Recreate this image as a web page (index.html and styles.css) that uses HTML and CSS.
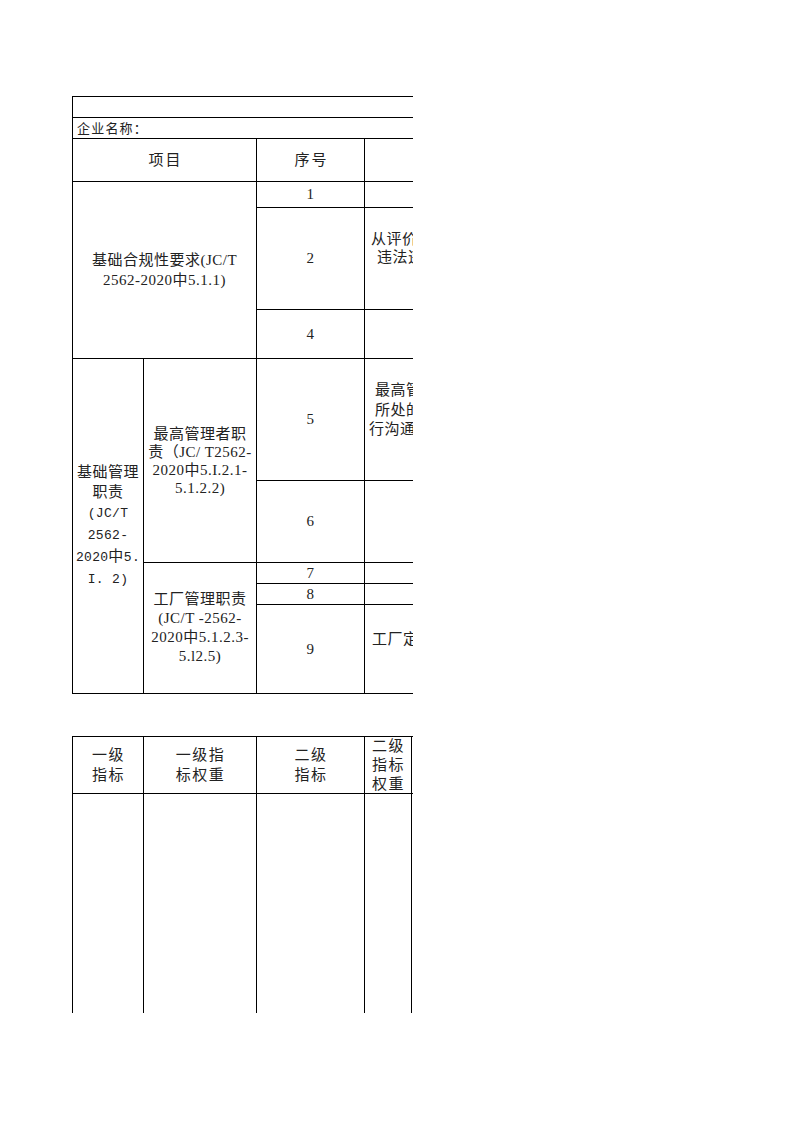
FILE: index.html
```html
<!DOCTYPE html>
<html lang="zh-CN">
<head>
<meta charset="utf-8">
<title>绿色工厂评价表</title>
<link rel="stylesheet" href="styles.css">
</head>
<body>
<div class="page">
  <div class="sheet">
    <div class="grid1">
      <div class="cell c-title"></div>
      <div class="cell c-co"><div>企业名称：</div></div>
      <div class="cell hd c-xm"><div>项目</div></div>
      <div class="cell hd"><div>序号</div></div>
      <div class="cell"></div>

      <div class="cell c-s1"><div>基础合规性要求(JC/T<br>2562-2020中5.1.1)</div></div>
      <div class="cell"><div>1</div></div>
      <div class="cell"></div>
      <div class="cell"><div>2</div></div>
      <div class="cell note pt-r2">
        <span class="ln in6">从评价期起，工厂无重大</span>
        <span class="ln in12">违法违规行为</span>
      </div>
      <div class="cell"><div>4</div></div>
      <div class="cell"></div>

      <div class="cell c-s2"><div>基础管理<br>职责<br><span class="hw"> (JC/T</span><br><span class="hw">2562-</span><br><span class="hw">2020</span>中<span class="hw">5.</span><br><span class="hw">I. 2)</span></div></div>
      <div class="cell c-s2a"><div>最高管理者职<br>责（JC/ T2562-<br>2020中5.I.2.1-<br>5.1.2.2)</div></div>
      <div class="cell c-s2b"><div>工厂管理职责<br>(JC/T -2562-<br>2020中5.1.2.3-<br>5.l2.5)</div></div>

      <div class="cell"><div>5</div></div>
      <div class="cell note pt-r5">
        <span class="ln in10">最高管理者</span>
        <span class="ln in10">所处的位置</span>
        <span class="ln in4">行沟通与协调</span>
      </div>
      <div class="cell"><div>6</div></div>
      <div class="cell"></div>
      <div class="cell"><div>7</div></div>
      <div class="cell"></div>
      <div class="cell"><div>8</div></div>
      <div class="cell"></div>
      <div class="cell"><div>9</div></div>
      <div class="cell note pt-r9">
        <span class="ln in7">工厂定期培训</span>
      </div>
    </div>
  </div>

  <div class="sheet sheet2">
    <div class="grid2">
      <div class="cell hd2"><div>一级<br>指标</div></div>
      <div class="cell hd2"><div>一级指<br>标权重</div></div>
      <div class="cell hd2"><div>二级<br>指标</div></div>
      <div class="cell hd2 hd2-narrow"><div>二级<br>指标<br>权重</div></div>
      <div class="cell"></div>
      <div class="cell"></div>
      <div class="cell"></div>
      <div class="cell"></div>
      <div class="cell"></div>
      <div class="cell"></div>
    </div>
  </div>
</div>
</body>
</html>
```
FILE: styles.css
```css
* {
  box-sizing: border-box;
}

body {
  margin: 0;
  background: #ffffff;
  color: #222222;
  font-family: "Liberation Serif", "Noto Sans CJK SC", serif;
  font-size: 15px;
}

.page {
  padding: 96px 0 0 72px;
}

.sheet {
  width: 341px;
  overflow: hidden;
}

.sheet2 {
  margin-top: 42px;
  height: 277px;
}

.grid1 {
  display: grid;
  width: max-content;
  grid-template-columns: 71px 113px 108px 420px;
  grid-template-rows: 21px 21px 43px 26px 102px 49px 122px 82px 21px 21px 89px;
  border-top: 1px solid #000;
  border-left: 1px solid #000;
}

.grid2 {
  display: grid;
  width: max-content;
  grid-template-columns: 71px 113px 108px 47px 420px;
  grid-template-rows: 57px 400px;
  border-top: 1px solid #000;
  border-left: 1px solid #000;
}

.cell {
  border-right: 1px solid #000;
  border-bottom: 1px solid #000;
  display: flex;
  align-items: center;
  justify-content: center;
  text-align: center;
  letter-spacing: 0.5px;
  line-height: 19px;
  white-space: nowrap;
}

.c-title {
  grid-row: 1;
  grid-column: 1 / -1;
}

.c-co {
  grid-row: 2;
  grid-column: 1 / -1;
  justify-content: flex-start;
  align-items: flex-end;
  padding: 0 0 0 4px;
  font-size: 13px;
  letter-spacing: 1.2px;
  line-height: 18px;
}

.c-xm {
  grid-row: 3;
  grid-column: 1 / 3;
}

.hd {
  letter-spacing: 2px;
  padding-left: 2px;
}

.c-s1 {
  grid-row: 4 / 7;
  grid-column: 1 / 3;
  line-height: 20px;
}

.c-s2 {
  grid-row: 7 / 12;
  grid-column: 1;
  line-height: 20px;
}

.c-s2a {
  grid-row: 7 / 9;
  grid-column: 2;
  line-height: 18px;
}

.c-s2b {
  grid-row: 9 / 12;
  grid-column: 2;
  line-height: 19px;
}

.hw {
  font-family: "Liberation Mono", "Noto Sans CJK SC", monospace;
  font-size: 13px;
  letter-spacing: 0.3px;
}

.note {
  display: block;
  text-align: left;
}

.ln {
  display: block;
}

.pt-r2 {
  padding-top: 22px;
  line-height: 18px;
}

.pt-r5 {
  padding-top: 22px;
  line-height: 19.5px;
}

.pt-r9 {
  padding-top: 25px;
}

.in4 { padding-left: 4px; }
.in6 { padding-left: 6px; }
.in7 { padding-left: 7px; }
.in10 { padding-left: 10px; }
.in12 { padding-left: 12px; }

.hd2 {
  letter-spacing: 1.5px;
  line-height: 20px;
  padding-left: 1px;
}

.hd2-narrow {
  line-height: 19px;
}
```
